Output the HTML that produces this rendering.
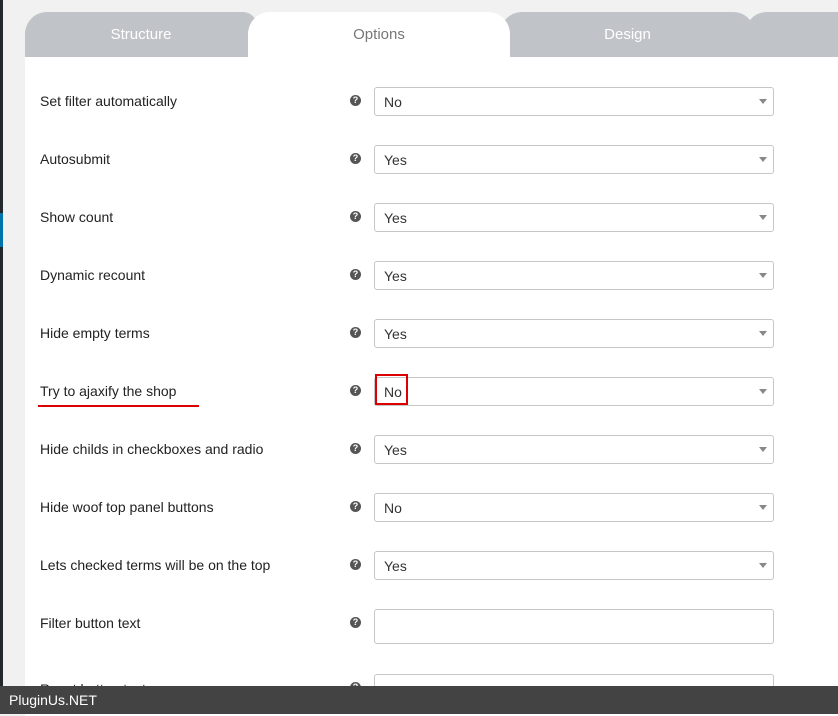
<!DOCTYPE html>
<html><head><style>
body{margin:0;width:838px;height:714px;overflow:hidden;background:#f1f1f1;font-family:"Liberation Sans",sans-serif;position:relative}
.dark{position:absolute;left:0;top:0;width:3px;height:714px;background:#23282d}
.blue{position:absolute;left:0;top:213px;width:3px;height:34px;background:#0073aa}
.panel{position:absolute;left:25px;top:56px;width:813px;height:660px;background:#fff}
.tab{position:absolute;top:12px;height:45px;background:#c0c3c7;color:#fff;font-size:15px;text-align:center;line-height:45px;border-radius:22px 22px 0 0}
.row{position:absolute;left:40px;font-size:14px;color:#222}
.help{position:absolute;left:350px;width:11px;height:11px;border-radius:50%;background:#555;color:#fff;font-size:9px;font-weight:bold;text-align:center;line-height:11px}
.sel{position:absolute;left:374px;width:398px;height:27px;border:1px solid #c6c6c6;border-radius:3px;background:#fff;font-size:14px;color:#333;line-height:29px;box-sizing:content-box}
.sel span{position:absolute;left:9px}
.sel:after{content:"";position:absolute;right:6px;top:11px;border:4px solid transparent;border-top:5px solid #888;border-bottom:0}
.inp{position:absolute;left:374px;width:398px;height:33px;border:1px solid #c6c6c6;border-radius:3px;background:#fff}
.foot{position:absolute;left:0;top:686px;width:838px;height:28px;background:#434343;color:#fff;font-size:14px;line-height:28px;padding-left:9px;box-sizing:border-box}
</style></head><body>
<div class="dark"></div><div class="blue"></div>
<div class="panel"></div>
<div class="tab" style="left:25px;width:232px;border-radius:22px 14px 0 0">Structure</div>
<div class="tab" style="left:745px;width:110px;border-radius:22px 0 0 0"></div>
<div class="tab" style="left:500px;width:255px">Design</div>
<div class="tab" style="left:248px;width:262px;background:#fff;color:#777">Options</div>

<div class="row" style="top:93px">Set filter automatically</div><div class="help" style="top:95px">?</div><div class="sel" style="top:87px"><span>No</span></div>
<div class="row" style="top:151px">Autosubmit</div><div class="help" style="top:153px">?</div><div class="sel" style="top:145px"><span>Yes</span></div>
<div class="row" style="top:209px">Show count</div><div class="help" style="top:211px">?</div><div class="sel" style="top:203px"><span>Yes</span></div>
<div class="row" style="top:267px">Dynamic recount</div><div class="help" style="top:269px">?</div><div class="sel" style="top:261px"><span>Yes</span></div>
<div class="row" style="top:325px">Hide empty terms</div><div class="help" style="top:327px">?</div><div class="sel" style="top:319px"><span>Yes</span></div>
<div class="row" style="top:383px">Try to ajaxify the shop</div><div class="help" style="top:385px">?</div><div class="sel" style="top:377px"><span>No</span></div>
<div style="position:absolute;left:38px;top:405px;width:161px;height:2px;background:#d00"></div>
<div style="position:absolute;left:375px;top:374px;width:29px;height:27px;border:2px solid #d00"></div>
<div class="row" style="top:441px">Hide childs in checkboxes and radio</div><div class="help" style="top:443px">?</div><div class="sel" style="top:435px"><span>Yes</span></div>
<div class="row" style="top:499px">Hide woof top panel buttons</div><div class="help" style="top:501px">?</div><div class="sel" style="top:493px"><span>No</span></div>
<div class="row" style="top:557px">Lets checked terms will be on the top</div><div class="help" style="top:559px">?</div><div class="sel" style="top:551px"><span>Yes</span></div>
<div class="row" style="top:615px">Filter button text</div><div class="help" style="top:617px">?</div><div class="inp" style="top:609px"></div>
<div class="row" style="top:681px">Reset button text</div><div class="help" style="top:682px">?</div><div class="inp" style="top:674px"></div>
<div class="foot">PluginUs.NET</div>
</body></html>
